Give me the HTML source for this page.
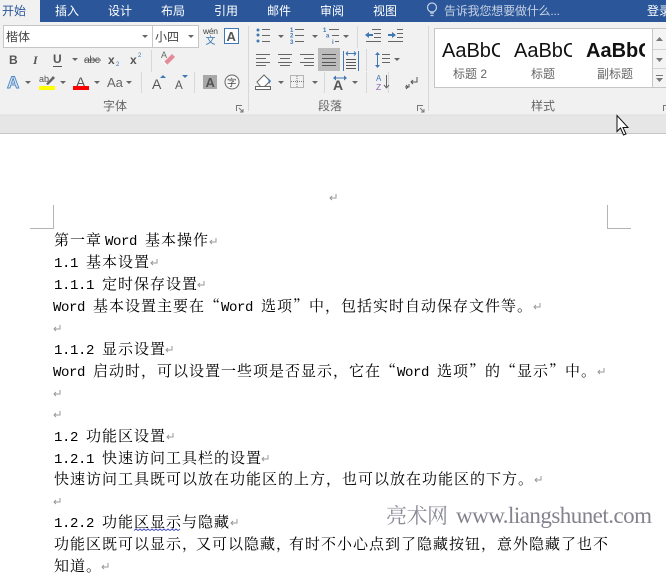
<!DOCTYPE html>
<html><head><meta charset="utf-8"><style>
html,body{margin:0;padding:0;background:#fff}
svg{display:block}
.u{font-family:"Liberation Sans","Noto Sans CJK SC",sans-serif}
.b{font-family:"Noto Serif CJK SC",serif;font-size:15px;letter-spacing:1px;fill:#000}
.m{font-family:"Liberation Mono",monospace;font-size:14px;letter-spacing:-.4px;fill:#000}
.t{font-size:12px;fill:#fff}
.l{font-size:12px;fill:#666}
.s{font-size:20px;fill:#111}
</style></head><body>
<svg width="666" height="580" viewBox="0 0 666 580" xmlns="http://www.w3.org/2000/svg" class="u">
<defs>
<path id="ar" d="M0 0h6l-3 3z" fill="#666"/>
<g id="ret" fill="none" stroke="#999" stroke-width="1"><path d="M7 0v4H1M3 2L1 4l2 2"/></g>
<g id="dl" fill="none" stroke="#777"><path d="M.5 6V.5H6"/><path d="M3 3l4 4M7 4v3H4"/></g>
</defs>
<rect width="666" height="580" fill="#fff"/>
<!-- title bar -->
<rect width="666" height="22" fill="#2b579a"/>
<rect width="40" height="22" fill="#f1f1f1"/>
<text x="2" y="15" font-size="12" fill="#2b579a" textLength="24">开始</text>
<text class="t" x="55" y="15">插入</text><text class="t" x="108" y="15">设计</text><text class="t" x="161" y="15">布局</text><text class="t" x="214" y="15">引用</text><text class="t" x="267" y="15">邮件</text><text class="t" x="320" y="15">审阅</text><text class="t" x="373" y="15">视图</text>
<g fill="none" stroke="#c5d0e3" stroke-width="1.2"><circle cx="432" cy="7.5" r="4.5"/><path d="M430 13h4M430.500 15.500h3"/></g>
<text x="444" y="15" font-size="12" fill="#c5d0e3" textLength="116">告诉我您想要做什么...</text>
<text class="t" x="647" y="15">登录</text>
<!-- ribbon -->
<rect y="22" width="666" height="93" fill="#f1f1f1"/>
<rect y="115" width="666" height="18" fill="#e6e6e6"/>
<rect y="114.500" width="666" height="1" fill="#dedede"/>
<rect y="133" width="666" height="1" fill="#c6c6c6"/>
<!-- font boxes -->
<rect x="3.500" y="25.500" width="195" height="22" fill="#fff" stroke="#c6c6c6"/>
<path d="M152.500 25v23" stroke="#c6c6c6"/>
<text x="6" y="41" font-size="12" fill="#444">楷体</text>
<use href="#ar" x="142" y="35"/>
<text x="155" y="41" font-size="12" fill="#444">小四</text>
<use href="#ar" x="188" y="35"/>
<text x="203" y="34" font-size="8.500" fill="#444" textLength="15">wén</text>
<text x="205.500" y="44" font-size="10" fill="#3f78b5">文</text>
<rect x="224.500" y="28.500" width="14" height="15" fill="#fff" stroke="#3f78b5"/>
<text x="226.500" y="41" font-size="13" font-weight="bold" fill="#555">A</text>
<!-- row2 -->
<text x="9" y="64" font-size="12" font-weight="bold" fill="#555">B</text>
<text x="33" y="64" font-size="12" font-weight="bold" font-style="italic" fill="#555" font-family="Liberation Serif">I</text>
<text x="53" y="63" font-size="12" font-weight="bold" fill="#555">U</text><path d="M53 66.500h9" stroke="#555"/>
<use href="#ar" x="72" y="58"/>
<text x="84" y="63" font-size="10.500" fill="#555" textLength="16">abc</text><path d="M84 60h17" stroke="#555"/>
<text x="108" y="64" font-size="12" font-weight="bold" fill="#555">x</text><text x="116" y="66" font-size="6" fill="#3f78b5">2</text>
<text x="130" y="64" font-size="12" font-weight="bold" fill="#555">x</text><text x="138" y="57" font-size="6" fill="#3f78b5">2</text>
<path d="M151.500 50v22" stroke="#d8d8d8"/>
<text x="161" y="58" font-size="9" fill="#666">A</text>
<path d="M164 62l8-8 3 3-8 8z" fill="#e58a97"/><path d="M162 60l5 5" stroke="#fff"/>
<!-- row3 -->
<text x="7" y="88" font-size="17" font-weight="bold" fill="#dbe7f5" stroke="#4f87c5" stroke-width=".9">A</text>
<use href="#ar" x="25" y="81"/>
<text x="39" y="82" font-size="9" fill="#555">ab</text>
<path d="M46 84l7-8 2 2-7 7z" fill="#666"/>
<rect x="39" y="86" width="16" height="4" fill="#ff0"/>
<use href="#ar" x="60" y="81"/>
<text x="76" y="87" font-size="14" fill="#555">A</text>
<rect x="73" y="86" width="16" height="4" fill="#f00"/>
<use href="#ar" x="94" y="81"/>
<text x="107" y="87" font-size="13" fill="#666">Aa</text>
<use href="#ar" x="126" y="81"/>
<path d="M141.500 72v21M194.500 72v21" stroke="#d8d8d8"/>
<text x="152" y="89" font-size="14" fill="#555">A</text><path d="M160 78l3-3 3 3z" fill="#3f78b5"/>
<text x="175" y="89" font-size="11.500" fill="#555">A</text><path d="M182 75h6l-3 3z" fill="#3f78b5"/>
<rect x="203" y="75" width="14" height="14" fill="#a8a8a8"/>
<text x="205.500" y="87" font-size="13" font-weight="bold" fill="#555">A</text>
<circle cx="232" cy="82" r="7" fill="#f8f8f8" stroke="#666"/>
<text x="227" y="86" font-size="9.500" fill="#444">字</text>
<text class="l" x="103" y="110">字体</text>
<use href="#dl" x="236" y="105"/>
<path d="M248.500 26v85" stroke="#d8d8d8"/>
<!-- paragraph row1 -->
<g fill="#3f78b5"><circle cx="258" cy="30" r="1.500"/><circle cx="258" cy="35" r="1.500"/><circle cx="258" cy="41" r="1.500"/></g>
<path d="M262 29.500h8M262 35.500h8M262 41.500h8" stroke="#666"/>
<use href="#ar" x="278" y="35"/>
<g fill="#3f78b5" font-size="6" font-weight="bold"><text x="290" y="32">1</text><text x="290" y="37.500">2</text><text x="290" y="44">3</text></g>
<path d="M295 29.500h9M295 35.500h9M295 41.500h9" stroke="#666"/>
<use href="#ar" x="312" y="35"/>
<g fill="#3f78b5" font-size="6" font-weight="bold"><text x="323" y="32">1</text><text x="326" y="37.500">a</text><text x="332" y="44">i</text></g>
<path d="M329 29.500h10M332 35.500h7M335 41.500h4" stroke="#666"/>
<use href="#ar" x="343" y="35"/>
<path d="M357.500 26v22" stroke="#d8d8d8"/>
<path d="M372 29.500h9M374 33.500h7M374 37.500h7M366 41.500h15" stroke="#666"/><path d="M365 35l4-3v2h4v2h-4v2z" fill="#3f78b5"/>
<path d="M397 29.500h6M397 33.500h6M397 37.500h6M388 41.500h15" stroke="#666"/><path d="M396 35l-4-3v2h-4v2h4v2z" fill="#3f78b5"/>
<!-- row2 -->
<path d="M256 54.500h14M256 58.500h10M256 62.500h14M256 65.500h10" stroke="#666"/>
<path d="M278 54.500h14M280 58.500h10M278 62.500h14M280 65.500h10" stroke="#666"/>
<path d="M300 54.500h14M304 58.500h10M300 62.500h14M304 65.500h10" stroke="#666"/>
<rect x="318" y="48" width="22" height="23" fill="#bcbcbc"/>
<path d="M322 54.500h14M322 58.500h14M322 62.500h14M322 65.500h14" stroke="#555"/>
<path d="M343.500 51v20M358.500 51v20" stroke="#3f78b5"/>
<path d="M346 53.500h10" stroke="#3f78b5"/><path d="M346 53.500l2-2M346 53.500l2 2M356 53.500l-2-2M356 53.500l-2 2" stroke="#3f78b5"/>
<path d="M346 59.500h10M346 62.500h10M346 65.500h10M346 68.500h10" stroke="#555"/>
<path d="M366.500 49v22" stroke="#d8d8d8"/>
<path d="M377.500 53v14" stroke="#3f78b5"/><path d="M375 55l2.500-3 2.500 3zM375 65l2.500 3 2.500-3z" fill="#3f78b5"/>
<path d="M382 54.500h8M382 58.500h8M382 62.500h8" stroke="#666"/>
<use href="#ar" x="394" y="58"/>
<!-- row3 -->
<path d="M257 82l7-7 6 6-6 6h-3z" fill="#fff" stroke="#666"/><path d="M268 78l3 3-2 3z" fill="#3f78b5"/>
<rect x="255.500" y="86.500" width="15" height="3" fill="#fff" stroke="#666"/>
<use href="#ar" x="278" y="81"/>
<rect x="290.500" y="75.500" width="13" height="12" fill="none" stroke="#777" stroke-dasharray="1 1"/>
<path d="M297 76v12M291 81.500h13" stroke="#777" stroke-dasharray="1 1"/>
<use href="#ar" x="312" y="81"/>
<path d="M324.500 72v21M366.500 72v21M388.500 72v21" stroke="#d8d8d8"/>
<path d="M334 78h12" stroke="#3f78b5"/><path d="M333 78l3-2.500v5zM347 78l-3-2.500v5z" fill="#3f78b5"/>
<text x="333" y="90" font-size="14" font-weight="bold" fill="#555">A</text>
<use href="#ar" x="352" y="81"/>
<text x="376" y="81" font-size="8" fill="#3f78b5">A</text>
<text x="376" y="90" font-size="8.500" fill="#8e5fb0">Z</text>
<path d="M386.500 75v13M384 85l2.500 3 2.500-3" fill="none" stroke="#666"/>
<path d="M417 77v5h-6M413 80l-2 2 2 2" fill="none" stroke="#555"/>
<path d="M409 84v3h-4M406 85l2 2-2 2" fill="none" stroke="#555"/>
<text class="l" x="318" y="110">段落</text>
<use href="#dl" x="417" y="105"/>
<path d="M428.500 26v85" stroke="#d8d8d8"/>
<!-- styles -->
<rect x="434.500" y="28.500" width="231" height="59" fill="#fff" stroke="#c6c6c6"/>
<path d="M652.500 29v58" stroke="#c6c6c6"/>
<rect x="653" y="29" width="13" height="58" fill="#f4f4f4"/><path d="M653 49.500h13M653 68.500h13" stroke="#d4d4d4"/>
<path d="M656 41l3.500-4 3.500 4z" fill="#777"/><path d="M656 58h7l-3.500 4z" fill="#777"/><path d="M656 75.500h7" stroke="#777"/><path d="M656 78h7l-3.500 4z" fill="#777"/>
<svg x="440" y="30" width="60" height="36"><text class="s" x="2" y="27">AaBbCc</text></svg>
<svg x="513" y="30" width="59" height="36"><text class="s" x="1" y="27">AaBbCc</text></svg>
<svg x="585" y="30" width="60" height="36"><text class="s" x="1" y="27" font-weight="bold">AaBbCc</text></svg>
<text x="453" y="78" font-size="12" fill="#666">标题 2</text>
<text x="531" y="78" font-size="12" fill="#666">标题</text>
<text x="597" y="78" font-size="12" fill="#666">副标题</text>
<text class="l" x="531" y="110">样式</text>
<use href="#dl" x="663" y="105"/>
<!-- cursor -->
<path d="M617 115.500v16l3.500-3.500 3 7 2.500-1-3-6.500h5z" fill="#fff" stroke="#111"/>
<!-- crop marks -->
<path d="M30 228.500h23.500V205M631 228.500h-23.500V205" fill="none" stroke="#b4b4b4"/>
<use href="#ret" x="329" y="194"/>
<!-- document -->
<text class="b" y="245"><tspan x="54">第一章</tspan><tspan class="m" x="105">Word</tspan><tspan x="145">基本操作</tspan></text><use href="#ret" x="209" y="238"/>
<text class="b" y="267"><tspan class="m" x="54">1.1</tspan><tspan x="86">基本设置</tspan></text><use href="#ret" x="150" y="259"/>
<text class="b" y="289"><tspan class="m" x="54">1.1.1</tspan><tspan x="102">定时保存设置</tspan></text><use href="#ret" x="197" y="281"/>
<text class="b" y="311"><tspan class="m" x="53">Word</tspan><tspan x="93">基本设置主要在“</tspan><tspan class="m" x="221">Word</tspan><tspan x="261">选项”中，包括实时自动保存文件等。</tspan></text><use href="#ret" x="533" y="303"/>
<use href="#ret" x="53" y="325"/>
<text class="b" y="354"><tspan class="m" x="54">1.1.2</tspan><tspan x="102">显示设置</tspan></text><use href="#ret" x="165" y="346"/>
<text class="b" y="376"><tspan class="m" x="53">Word</tspan><tspan x="93">启动时，可以设置一些项是否显示，它在“</tspan><tspan class="m" x="397">Word</tspan><tspan x="437">选项”的“显示”中。</tspan></text><use href="#ret" x="597" y="368"/>
<use href="#ret" x="53" y="390"/>
<use href="#ret" x="53" y="411"/>
<text class="b" y="441"><tspan class="m" x="54">1.2</tspan><tspan x="86">功能区设置</tspan></text><use href="#ret" x="166" y="433"/>
<text class="b" y="463"><tspan class="m" x="54">1.2.1</tspan><tspan x="102">快速访问工具栏的设置</tspan></text><use href="#ret" x="261" y="455"/>
<text class="b" x="54" y="484">快速访问工具既可以放在功能区的上方，也可以放在功能区的下方。</text><use href="#ret" x="534" y="476"/>
<use href="#ret" x="53" y="498"/>
<text class="b" y="527"><tspan class="m" x="54">1.2.2</tspan><tspan x="102">功能区显示与隐藏</tspan></text><use href="#ret" x="230" y="519"/>
<path d="M134 530.500l2-1.500 2 1.500 2-1.500 2 1.500 2-1.500 2 1.500 2-1.500 2 1.500 2-1.500 2 1.500 2-1.500 2 1.500 2-1.500 2 1.500 2-1.500 2 1.500 2-1.500 2 1.500 2-1.500 2 1.500 2-1.500 2 1.500 2-1.500" fill="none" stroke="#4a55c8"/>
<text class="b" y="549"><tspan x="54">功能区既可以显示，</tspan><tspan x="196">又可以隐藏，</tspan><tspan x="289">有时不小心点到了隐藏按钮，</tspan><tspan x="497">意外隐藏了也不</tspan></text>
<text class="b" x="54" y="571">知道。</text><use href="#ret" x="101" y="563"/>
<!-- watermark -->
<text x="386" y="523" font-size="21" fill="#8b8b97" font-family="Noto Serif CJK SC, serif" textLength="62">亮术网</text>
<text x="456" y="523" font-size="23" fill="#83838f" font-family="Liberation Serif, serif" textLength="196">www.liangshunet.com</text>
</svg>
</body></html>
